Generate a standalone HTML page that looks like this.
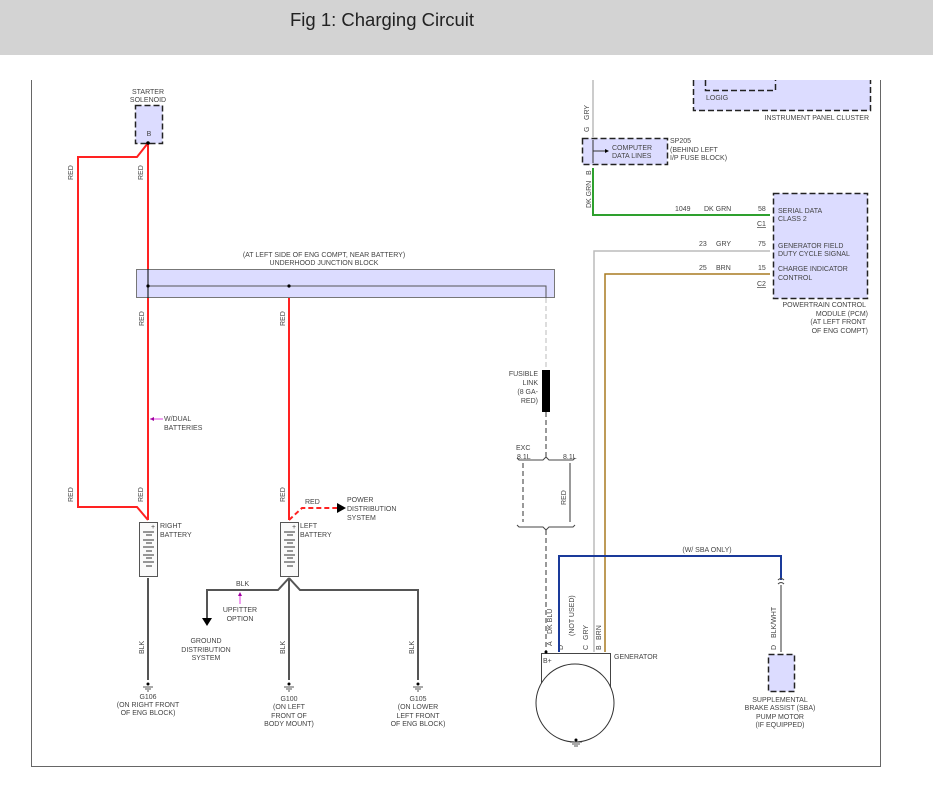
<!DOCTYPE html>
<html><head><meta charset="utf-8"><style>
html,body{margin:0;padding:0;background:#fff;width:933px;height:792px;overflow:hidden}
.hd{position:absolute;left:0;top:0;width:933px;height:55px;background:#d3d3d3}
.hd span{position:absolute;left:290px;top:9px;font:18.5px "Liberation Sans",sans-serif;color:#222}
svg{position:absolute;left:0;top:0}
text{font-family:"Liberation Sans",sans-serif;font-size:7px;fill:#444}
.db{stroke:#222;stroke-width:1.5;stroke-dasharray:6,3}
</style></head><body>
<div class="hd"><span>Fig 1: Charging Circuit</span></div>
<svg width="933" height="792" viewBox="0 0 933 792">
<path d="M31.5 80V766.5H880.5V80" fill="none" stroke="#666" stroke-width="1"/>
<rect x="135.5" y="105.5" width="27" height="38" fill="#dcdcff" class="db"/>
<text x="149" y="136" text-anchor="middle">B</text>
<text x="148" y="94" text-anchor="middle">STARTER</text>
<text x="148" y="102" text-anchor="middle">SOLENOID</text>
<g stroke="#ff2222" stroke-width="2" fill="none">
<path d="M148 143V520"/>
<path d="M148 143L137 157H78V507H137L148 520"/>
<path d="M289 286V520"/>
</g>
<path d="M289 520L302 508H337" stroke="#ff2222" stroke-width="2" fill="none" stroke-dasharray="5,3"/>
<path d="M337 503L346 508L337 513Z" fill="#000"/>
<circle cx="148" cy="143" r="1.8" fill="#000"/>
<g transform="rotate(-90)">
<text x="-180" y="73">RED</text><text x="-180" y="143">RED</text>
<text x="-326" y="144">RED</text><text x="-326" y="285">RED</text>
<text x="-502" y="73">RED</text><text x="-502" y="143">RED</text><text x="-502" y="285">RED</text>
<text x="-654" y="144">BLK</text><text x="-654" y="285">BLK</text><text x="-654" y="414">BLK</text>
<text x="-505" y="566">RED</text>
<text x="-120" y="589">GRY</text><text x="-132" y="589">G</text>
<text x="-208" y="591">DK GRN</text><text x="-175" y="591">B</text>
<text x="-646" y="552">A</text><text x="-634" y="552">DK BLU</text>
<text x="-650" y="563">D</text><text x="-636" y="574">(NOT USED)</text>
<text x="-650" y="588">C</text><text x="-640" y="588">GRY</text>
<text x="-650" y="601">B</text><text x="-640" y="601">BRN</text>
<text x="-650" y="776">D</text><text x="-638" y="776">BLK/WHT</text>
</g>
<rect x="136.5" y="269.5" width="418" height="28" fill="#dcdcff" stroke="#777"/>
<path d="M148 286H546V298" stroke="#555" fill="none"/>
<path d="M148 269V298" stroke="#000"/>
<circle cx="148" cy="286" r="1.6" fill="#000"/><circle cx="289" cy="286" r="1.6" fill="#000"/>
<text x="324" y="257" text-anchor="middle">(AT LEFT SIDE OF ENG COMPT, NEAR BATTERY)</text>
<text x="324" y="265" text-anchor="middle">UNDERHOOD JUNCTION BLOCK</text>
<path d="M546 298V368" stroke="#bbb" stroke-dasharray="5,3"/>
<rect x="542" y="370" width="8" height="42" fill="#000"/>
<path d="M546 412V458" stroke="#333" stroke-dasharray="5,3"/>
<text x="538" y="376" text-anchor="end">FUSIBLE</text><text x="538" y="385" text-anchor="end">LINK</text>
<text x="538" y="394" text-anchor="end">(8 GA-</text><text x="538" y="403" text-anchor="end">RED)</text>
<text x="516" y="450">EXC</text><text x="517" y="459">8.1L</text><text x="563" y="459">8.1L</text>
<path d="M517 458L519 460H543L546 457L549 460H573L575 458M517 525L519 527H543L546 530L549 527H573L575 525" stroke="#444" fill="none"/>
<path d="M523 463V522" stroke="#333" stroke-dasharray="5,3"/>
<path d="M570 463V522" stroke="#333"/>
<path d="M546 530V652" stroke="#333" stroke-dasharray="5,3"/>
<path d="M150 419H163" stroke="#e040e0"/><path d="M150 419L154 417V421Z" fill="#a000a0"/>
<text x="164" y="421">W/DUAL</text><text x="164" y="430">BATTERIES</text>
<g fill="#fafafa" stroke="#555">
<rect x="139.5" y="522.5" width="18" height="54"/><rect x="280.5" y="522.5" width="18" height="54"/>
</g>
<g stroke="#333">
<path d="M143 532H154M146 535H152M143 540H154M146 543H152M143 547H154M146 551H152M143 555H154M146 558H152M143 562H154M146 566H152"/>
<path d="M284 532H295M287 535H293M284 540H295M287 543H293M284 547H295M287 551H293M284 555H295M287 558H293M284 562H295M287 566H293"/>
</g>
<text x="151" y="529" font-size="6">+</text><text x="292" y="529" font-size="6">+</text>
<text x="160" y="528">RIGHT</text><text x="160" y="537">BATTERY</text>
<text x="300" y="528">LEFT</text><text x="300" y="537">BATTERY</text>
<text x="305" y="504">RED</text>
<text x="347" y="502">POWER</text><text x="347" y="511">DISTRIBUTION</text><text x="347" y="520">SYSTEM</text>
<g stroke="#555" stroke-width="2" fill="none">
<path d="M148 578V680"/>
<path d="M289 578V680M289 578L278 590H207V618M289 578L300 590H418V680"/>
</g>
<path d="M202 618L207 626L212 618Z" fill="#000"/>
<text x="236" y="586">BLK</text>
<path d="M240 604V594" stroke="#e040e0"/><path d="M238 596L240 592L242 596Z" fill="#a000a0"/>
<text x="240" y="612" text-anchor="middle">UPFITTER</text><text x="240" y="621" text-anchor="middle">OPTION</text>
<text x="206" y="643" text-anchor="middle">GROUND</text><text x="206" y="652" text-anchor="middle">DISTRIBUTION</text><text x="206" y="660" text-anchor="middle">SYSTEM</text>
<g stroke="#555"><path d="M143 687H153M145 689H151M147 691H149M284 687H294M286 689H292M288 691H290M413 687H423M415 689H421M417 691H419M570 742H582M572 744H580M574 746H578"/></g>
<circle cx="148" cy="684" r="1.5" fill="#000"/><circle cx="289" cy="684" r="1.5" fill="#000"/><circle cx="418" cy="684" r="1.5" fill="#000"/>
<text x="148" y="699" text-anchor="middle">G106</text><text x="148" y="707" text-anchor="middle">(ON RIGHT FRONT</text><text x="148" y="715" text-anchor="middle">OF ENG BLOCK)</text>
<text x="289" y="701" text-anchor="middle">G100</text><text x="289" y="709" text-anchor="middle">(ON LEFT</text><text x="289" y="718" text-anchor="middle">FRONT OF</text><text x="289" y="726" text-anchor="middle">BODY MOUNT)</text>
<text x="418" y="701" text-anchor="middle">G105</text><text x="418" y="709" text-anchor="middle">(ON LOWER</text><text x="418" y="718" text-anchor="middle">LEFT FRONT</text><text x="418" y="726" text-anchor="middle">OF ENG BLOCK)</text>
<path d="M693.5 80V110.5H870.5V80" fill="#dcdcff" class="db"/>
<path d="M705.5 80V90.5H775.5V80" fill="none" class="db"/>
<text x="706" y="100" fill="#a02020">LOGIG</text>
<text x="869" y="120" text-anchor="end">INSTRUMENT PANEL CLUSTER</text>
<path d="M593 80V137" stroke="#bbb" stroke-width="1.5"/>
<rect x="582.5" y="138.5" width="85" height="26" fill="#dcdcff" class="db"/>
<path d="M593 140V163M593 151H605" stroke="#333"/><path d="M605 149L609 151L605 153Z" fill="#000"/>
<text x="612" y="150">COMPUTER</text><text x="612" y="158">DATA LINES</text>
<text x="670" y="143" fill="#3050a0">SP205</text><text x="670" y="152">(BEHIND LEFT</text><text x="670" y="160">I/P FUSE BLOCK)</text>
<path d="M593 168V215H770" stroke="#2ea02e" stroke-width="2" fill="none"/>
<text x="675" y="211" fill="#3050a0">1049</text><text x="704" y="211">DK GRN</text><text x="758" y="211">58</text>
<text x="757" y="226" text-decoration="underline">C1</text>
<path d="M594 652V251H770" stroke="#bbb" stroke-width="1.5" fill="none"/>
<path d="M605 652V274H770" stroke="#a87a20" stroke-width="1.5" fill="none"/>
<text x="699" y="246">23</text><text x="716" y="246">GRY</text><text x="758" y="246">75</text>
<text x="699" y="270">25</text><text x="716" y="270">BRN</text><text x="758" y="270">15</text>
<text x="757" y="286" text-decoration="underline">C2</text>
<rect x="773.5" y="193.5" width="94" height="105" fill="#dcdcff" class="db"/>
<text x="778" y="213">SERIAL DATA</text><text x="778" y="221">CLASS 2</text>
<text x="778" y="248">GENERATOR FIELD</text><text x="778" y="256">DUTY CYCLE SIGNAL</text>
<text x="778" y="271">CHARGE INDICATOR</text><text x="778" y="280">CONTROL</text>
<text x="866" y="307" text-anchor="end">POWERTRAIN CONTROL</text><text x="868" y="316" text-anchor="end">MODULE (PCM)</text>
<text x="866" y="324" text-anchor="end">(AT LEFT FRONT</text><text x="868" y="333" text-anchor="end">OF ENG COMPT)</text>
<path d="M559 652V556H781V580" stroke="#1a3a9a" stroke-width="2" fill="none"/>
<text x="707" y="552" text-anchor="middle">(W/ SBA ONLY)</text>
<path d="M778 580Q781 577 784 580M778 584Q781 581 784 584" stroke="#444" fill="none"/>
<path d="M781 585V652" stroke="#999" stroke-width="2"/>
<rect x="768.5" y="654.5" width="26" height="37" fill="#dcdcff" class="db"/>
<text x="780" y="702" text-anchor="middle">SUPPLEMENTAL</text><text x="780" y="710" text-anchor="middle">BRAKE ASSIST (SBA)</text>
<text x="780" y="719" text-anchor="middle">PUMP MOTOR</text><text x="780" y="727" text-anchor="middle">(IF EQUIPPED)</text>
<path d="M541.5 690V653.5H610.5V690" stroke="#444" fill="none"/>
<circle cx="575" cy="703" r="39" fill="#fff" stroke="#333"/>
<circle cx="576" cy="740" r="1.5" fill="#000"/>
<circle cx="546" cy="652" r="1.5" fill="#000"/>
<text x="543" y="663">B+</text>
<text x="614" y="659">GENERATOR</text>
</svg>
</body></html>
